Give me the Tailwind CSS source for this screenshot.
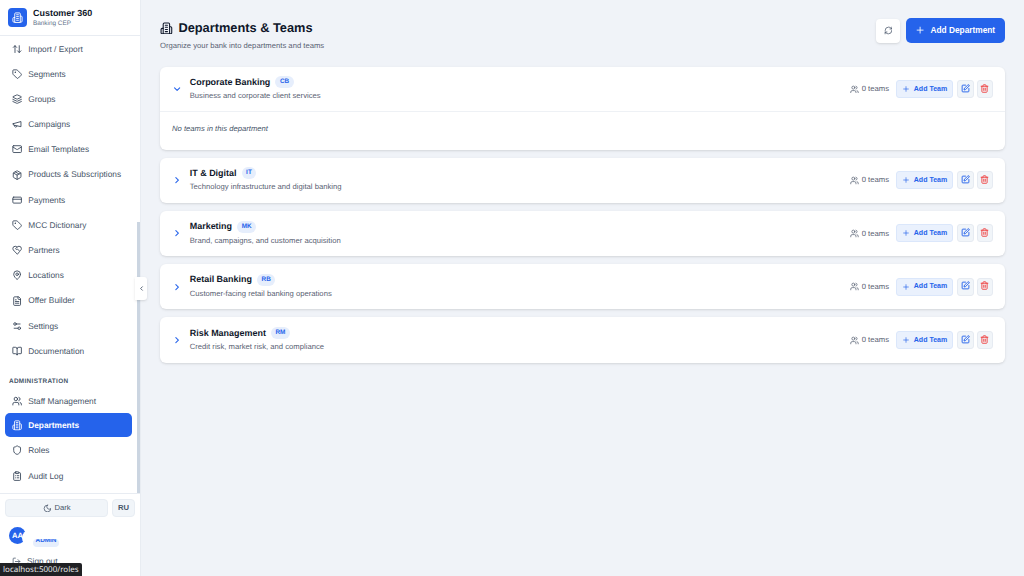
<!DOCTYPE html>
<html lang="en">

<head>
  <meta charset="UTF-8">
  <title>Departments & Teams</title>
  <script src="https://cdn.jsdelivr.net/npm/@tailwindcss/browser@4"></script>
</head>

<body class="h-[576px] w-[1024px] overflow-hidden bg-[#f0f3f8] font-['Liberation_Sans',sans-serif] [text-rendering:geometricPrecision]">
  <div class="flex h-full">

    <!-- Sidebar -->
    <aside class="relative flex h-full w-[141px] shrink-0 flex-col border-r border-[#e8ecf2] bg-white">
      <div class="flex h-[36px] shrink-0 items-center gap-[6px] border-b border-[#e8ecf2] pl-[8px]">
        <div class="flex h-[19px] w-[19px] items-center justify-center rounded-[4px] bg-[#2563eb] text-white">
          <svg class="h-[11px] w-[11px]" viewBox="0 0 24 24" fill="none" stroke="currentColor" stroke-width="2" stroke-linecap="round" stroke-linejoin="round"><path d="M6 22V4a2 2 0 0 1 2-2h8a2 2 0 0 1 2 2v18Z"/><path d="M6 12H4a2 2 0 0 0-2 2v6a2 2 0 0 0 2 2h2"/><path d="M18 9h2a2 2 0 0 1 2 2v9a2 2 0 0 1-2 2h-2"/><path d="M10 6h4M10 10h4M10 14h4M10 18h4"/></svg>
        </div>
        <div>
          <div class="text-[8.96px] leading-[12px] font-bold text-[#0f172a]">Customer 360</div>
          <div class="text-[6.4px] leading-[9px] text-[#64748b]">Banking CEP</div>
        </div>
      </div>

      <nav class="flex flex-col px-[5px] pt-[0.2px] text-[8.32px] text-[#475569]">
        <a class="flex h-[25.2px] items-center gap-[6.4px] pl-[6.6px]">
          <svg class="h-[10.24px] w-[10.24px] text-[#334155]" viewBox="0 0 24 24" fill="none" stroke="currentColor" stroke-width="2" stroke-linecap="round" stroke-linejoin="round"><path d="m21 16-4 4-4-4"/><path d="M17 20V4"/><path d="m3 8 4-4 4 4"/><path d="M7 4v16"/></svg>
          Import / Export
        </a>
        <a class="flex h-[25.2px] items-center gap-[6.4px] pl-[6.6px]">
          <svg class="h-[10.24px] w-[10.24px] text-[#334155]" viewBox="0 0 24 24" fill="none" stroke="currentColor" stroke-width="2" stroke-linecap="round" stroke-linejoin="round"><path d="M12.6 2.6A2 2 0 0 0 11.2 2H4a2 2 0 0 0-2 2v7.2a2 2 0 0 0 .6 1.4l8.7 8.7a2.4 2.4 0 0 0 3.4 0l6.6-6.6a2.4 2.4 0 0 0 0-3.4z"/><circle cx="7.5" cy="7.5" r=".5" fill="currentColor"/></svg>
          Segments
        </a>
        <a class="flex h-[25.2px] items-center gap-[6.4px] pl-[6.6px]">
          <svg class="h-[10.24px] w-[10.24px] text-[#334155]" viewBox="0 0 24 24" fill="none" stroke="currentColor" stroke-width="2" stroke-linecap="round" stroke-linejoin="round"><path d="M12.8 2.2a2 2 0 0 0-1.6 0L2.6 6.1a1 1 0 0 0 0 1.8l8.6 3.9a2 2 0 0 0 1.6 0l8.6-3.9a1 1 0 0 0 0-1.8z"/><path d="m22 17.6-9.2 4.2a2 2 0 0 1-1.6 0L2 17.6"/><path d="m22 12.6-9.2 4.2a2 2 0 0 1-1.6 0L2 12.6"/></svg>
          Groups
        </a>
        <a class="flex h-[25.2px] items-center gap-[6.4px] pl-[6.6px]">
          <svg class="h-[10.24px] w-[10.24px] text-[#334155]" viewBox="0 0 24 24" fill="none" stroke="currentColor" stroke-width="2" stroke-linecap="round" stroke-linejoin="round"><path d="m3 11 18-5v12L3 14v-3z"/><path d="M11.6 16.8a3 3 0 1 1-5.8-1.6"/></svg>
          Campaigns
        </a>
        <a class="flex h-[25.2px] items-center gap-[6.4px] pl-[6.6px]">
          <svg class="h-[10.24px] w-[10.24px] text-[#334155]" viewBox="0 0 24 24" fill="none" stroke="currentColor" stroke-width="2" stroke-linecap="round" stroke-linejoin="round"><rect x="2" y="4" width="20" height="16" rx="2"/><path d="m22 7-8.97 5.7a1.94 1.94 0 0 1-2.06 0L2 7"/></svg>
          Email Templates
        </a>
        <a class="flex h-[25.2px] items-center gap-[6.4px] pl-[6.6px]">
          <svg class="h-[10.24px] w-[10.24px] text-[#334155]" viewBox="0 0 24 24" fill="none" stroke="currentColor" stroke-width="2" stroke-linecap="round" stroke-linejoin="round"><path d="M21 8a2 2 0 0 0-1-1.7l-7-4a2 2 0 0 0-2 0l-7 4A2 2 0 0 0 3 8v8a2 2 0 0 0 1 1.7l7 4a2 2 0 0 0 2 0l7-4a2 2 0 0 0 1-1.7Z"/><path d="m3.3 7 8.7 5 8.7-5"/><path d="M12 22V12"/><path d="m7.5 4.3 9 5.1"/></svg>
          <span class="whitespace-nowrap">Products &amp; Subscriptions</span>
        </a>
        <a class="flex h-[25.2px] items-center gap-[6.4px] pl-[6.6px]">
          <svg class="h-[10.24px] w-[10.24px] text-[#334155]" viewBox="0 0 24 24" fill="none" stroke="currentColor" stroke-width="2" stroke-linecap="round" stroke-linejoin="round"><rect x="2" y="5" width="20" height="14" rx="2"/><path d="M2 10h20"/></svg>
          Payments
        </a>
        <a class="flex h-[25.2px] items-center gap-[6.4px] pl-[6.6px]">
          <svg class="h-[10.24px] w-[10.24px] text-[#334155]" viewBox="0 0 24 24" fill="none" stroke="currentColor" stroke-width="2" stroke-linecap="round" stroke-linejoin="round"><path d="M12.6 2.6A2 2 0 0 0 11.2 2H4a2 2 0 0 0-2 2v7.2a2 2 0 0 0 .6 1.4l8.7 8.7a2.4 2.4 0 0 0 3.4 0l6.6-6.6a2.4 2.4 0 0 0 0-3.4z"/><circle cx="7.5" cy="7.5" r=".5" fill="currentColor"/></svg>
          MCC Dictionary
        </a>
        <a class="flex h-[25.2px] items-center gap-[6.4px] pl-[6.6px]">
          <svg class="h-[10.24px] w-[10.24px] text-[#334155]" viewBox="0 0 24 24" fill="none" stroke="currentColor" stroke-width="2" stroke-linecap="round" stroke-linejoin="round"><path d="M19 14c1.5-1.5 3-3.2 3-5.500A5.500 5.500 0 0 0 16.500 3c-1.800 0-3 .5-4.500 2-1.500-1.500-2.700-2-4.500-2A5.500 5.500 0 0 0 2 8.500c0 2.300 1.500 4 3 5.500l7 7Z"/><path d="M12 5 9 8c-1 1 0 2.500 1.500 2.500 1 0 1.800-.5 2.500-1l4 4"/></svg>
          Partners
        </a>
        <a class="flex h-[25.2px] items-center gap-[6.4px] pl-[6.6px]">
          <svg class="h-[10.24px] w-[10.24px] text-[#334155]" viewBox="0 0 24 24" fill="none" stroke="currentColor" stroke-width="2" stroke-linecap="round" stroke-linejoin="round"><path d="M20 10c0 5-5.500 10.200-7.400 11.800a1 1 0 0 1-1.200 0C9.500 20.200 4 15 4 10a8 8 0 0 1 16 0"/><circle cx="12" cy="10" r="3"/></svg>
          Locations
        </a>
        <a class="flex h-[25.2px] items-center gap-[6.4px] pl-[6.6px]">
          <svg class="h-[10.24px] w-[10.24px] text-[#334155]" viewBox="0 0 24 24" fill="none" stroke="currentColor" stroke-width="2" stroke-linecap="round" stroke-linejoin="round"><path d="M15 2H6a2 2 0 0 0-2 2v16a2 2 0 0 0 2 2h12a2 2 0 0 0 2-2V7Z"/><path d="M14 2v4a2 2 0 0 0 2 2h4"/><path d="M16 13H8M16 17H8M10 9H8"/></svg>
          Offer Builder
        </a>
        <a class="flex h-[25.2px] items-center gap-[6.4px] pl-[6.6px]">
          <svg class="h-[10.24px] w-[10.24px] text-[#334155]" viewBox="0 0 24 24" fill="none" stroke="currentColor" stroke-width="2" stroke-linecap="round" stroke-linejoin="round"><path d="M14 17H5"/><path d="M19 7h-9"/><circle cx="17" cy="17" r="3"/><circle cx="7" cy="7" r="3"/></svg>
          Settings
        </a>
        <a class="flex h-[25.2px] items-center gap-[6.4px] pl-[6.6px]">
          <svg class="h-[10.24px] w-[10.24px] text-[#334155]" viewBox="0 0 24 24" fill="none" stroke="currentColor" stroke-width="2" stroke-linecap="round" stroke-linejoin="round"><path d="M12 7v14"/><path d="M3 18a1 1 0 0 1-1-1V4a1 1 0 0 1 1-1h5a4 4 0 0 1 4 4 4 4 0 0 1 4-4h5a1 1 0 0 1 1 1v13a1 1 0 0 1-1 1h-6a3 3 0 0 0-3 3 3 3 0 0 0-3-3z"/></svg>
          Documentation
        </a>

        <div class="mt-[13px] mb-[2.6px] pl-[4px] text-[6.4px] leading-[9px] font-bold tracking-[0.32px] text-[#475569]">ADMINISTRATION</div>

        <a class="flex h-[25.2px] items-center gap-[6.4px] pl-[6.6px]">
          <svg class="h-[10.24px] w-[10.24px] text-[#334155]" viewBox="0 0 24 24" fill="none" stroke="currentColor" stroke-width="2" stroke-linecap="round" stroke-linejoin="round"><path d="M16 21v-2a4 4 0 0 0-4-4H6a4 4 0 0 0-4 4v2"/><circle cx="9" cy="7" r="4"/><path d="M22 21v-2a4 4 0 0 0-3-3.870"/><path d="M16 3.130a4 4 0 0 1 0 7.750"/></svg>
          Staff Management
        </a>
        <a class="flex h-[24px] w-[127px] items-center gap-[6.4px] rounded-[5px] bg-[#2563eb] pl-[6.6px] font-bold text-white">
          <svg class="h-[10.24px] w-[10.24px]" viewBox="0 0 24 24" fill="none" stroke="currentColor" stroke-width="2" stroke-linecap="round" stroke-linejoin="round"><path d="M6 22V4a2 2 0 0 1 2-2h8a2 2 0 0 1 2 2v18Z"/><path d="M6 12H4a2 2 0 0 0-2 2v6a2 2 0 0 0 2 2h2"/><path d="M18 9h2a2 2 0 0 1 2 2v9a2 2 0 0 1-2 2h-2"/><path d="M10 6h4M10 10h4M10 14h4M10 18h4"/></svg>
          Departments
        </a>
        <a class="flex h-[26px] items-center gap-[6.4px] pl-[6.6px]">
          <svg class="h-[10.24px] w-[10.24px] text-[#334155]" viewBox="0 0 24 24" fill="none" stroke="currentColor" stroke-width="2" stroke-linecap="round" stroke-linejoin="round"><path d="M20 13c0 5-3.500 7.500-7.660 8.950a1 1 0 0 1-.67-.01C7.500 20.500 4 18 4 13V6a1 1 0 0 1 1-1c2 0 4.500-1.200 6.240-2.720a1.170 1.170 0 0 1 1.520 0C14.510 3.810 17 5 19 5a1 1 0 0 1 1 1z"/></svg>
          Roles
        </a>
        <a class="flex h-[25.2px] items-center gap-[6.4px] pl-[6.6px]">
          <svg class="h-[10.24px] w-[10.24px] text-[#334155]" viewBox="0 0 24 24" fill="none" stroke="currentColor" stroke-width="2" stroke-linecap="round" stroke-linejoin="round"><rect x="8" y="2" width="8" height="4" rx="1"/><path d="M16 4h2a2 2 0 0 1 2 2v14a2 2 0 0 1-2 2H6a2 2 0 0 1-2-2V6a2 2 0 0 1 2-2h2"/><path d="M12 11h4M12 16h4M8 11h.01M8 16h.01"/></svg>
          Audit Log
        </a>
      </nav>

      <!-- scrollbar thumb -->
      <div class="absolute top-[222px] right-0 h-[272px] w-[3px] bg-[#cbd5e1]"></div>

      <!-- collapse handle -->
      <div class="absolute top-[277px] right-[-7px] z-10 flex h-[23px] w-[12px] items-center justify-center rounded-r-[3px] bg-white text-[#475569] shadow-sm">
        <svg class="h-[7px] w-[7px]" viewBox="0 0 24 24" fill="none" stroke="currentColor" stroke-width="3" stroke-linecap="round" stroke-linejoin="round"><path d="m15 18-6-6 6-6"/></svg>
      </div>

      <!-- sidebar footer -->
      <div class="absolute right-0 bottom-0 left-0 h-[83px] border-t border-[#e8ecf2] bg-white px-[5px] pt-[5px]">
        <div class="flex gap-[4px]">
          <button class="flex h-[18px] w-[104px] items-center justify-center gap-[3px] rounded-[4px] border border-[#e8edf3] bg-[#f1f5f9] text-[7.68px] text-[#475569]">
            <svg class="h-[8.96px] w-[8.96px]" viewBox="0 0 24 24" fill="none" stroke="currentColor" stroke-width="2" stroke-linecap="round" stroke-linejoin="round"><path d="M12 3a6 6 0 0 0 9 9 9 9 0 1 1-9-9Z"/></svg>
            Dark
          </button>
          <button class="flex h-[18px] w-[23px] items-center justify-center rounded-[4px] border border-[#e8edf3] bg-[#f1f5f9] text-[7.68px] font-bold text-[#475569]">RU</button>
        </div>
        <div class="relative mt-[10px] h-[20px]">
          <div class="ml-[4px] flex h-[17px] w-[17px] items-center rounded-full bg-[#2563eb] pl-[3px] text-[7.68px] font-bold text-white">AA</div>
          <!-- name block sits over the avatar and clips it -->
          <div class="absolute top-[3px] left-[17px] h-[16px] w-[16px] rounded-full bg-white"></div>
          <div class="absolute top-[12px] left-[28px] h-[7.5px] w-[26px] overflow-hidden rounded-full bg-[#e6eefc] text-center text-[6.4px] leading-[3px] font-bold text-[#2563eb]">ADMIN</div>
        </div>
        <div class="mt-[8px] flex items-center gap-[6px] pl-[7px] text-[8.32px] text-[#475569]">
          <svg class="h-[9px] w-[9px]" viewBox="0 0 24 24" fill="none" stroke="currentColor" stroke-width="2" stroke-linecap="round" stroke-linejoin="round"><path d="M9 21H5a2 2 0 0 1-2-2V5a2 2 0 0 1 2-2h4"/><path d="m16 17 5-5-5-5"/><path d="M21 12H9"/></svg>
          Sign out
        </div>
      </div>
    </aside>

    <!-- Main -->
    <main class="min-w-0 flex-1 px-[19px] pt-[18px]">
      <div class="flex items-start justify-between">
        <div>
          <div class="flex h-[20px] items-center gap-[5.6px]">
            <svg class="h-[12.8px] w-[12.8px] text-[#0f172a]" viewBox="0 0 24 24" fill="none" stroke="currentColor" stroke-width="2" stroke-linecap="round" stroke-linejoin="round"><path d="M6 22V4a2 2 0 0 1 2-2h8a2 2 0 0 1 2 2v18Z"/><path d="M6 12H4a2 2 0 0 0-2 2v6a2 2 0 0 0 2 2h2"/><path d="M18 9h2a2 2 0 0 1 2 2v9a2 2 0 0 1-2 2h-2"/><path d="M10 6h4M10 10h4M10 14h4M10 18h4"/></svg>
            <h1 class="text-[12.8px] font-bold text-[#0f172a]">Departments &amp; Teams</h1>
          </div>
          <p class="mt-[1px] text-[7.68px] leading-[14px] text-[#596273]">Organize your bank into departments and teams</p>
        </div>
        <div class="flex items-center gap-[6px]">
          <button class="flex h-[24px] w-[24px] items-center justify-center rounded-[4px] bg-white text-[#475569] shadow-sm">
            <svg class="h-[8.96px] w-[8.96px]" viewBox="0 0 24 24" fill="none" stroke="currentColor" stroke-width="2" stroke-linecap="round" stroke-linejoin="round"><path d="M3 12a9 9 0 0 1 9-9 9.750 9.750 0 0 1 6.740 2.740L21 8"/><path d="M21 3v5h-5"/><path d="M21 12a9 9 0 0 1-9 9 9.750 9.750 0 0 1-6.740-2.740L3 16"/><path d="M8 16H3v5"/></svg>
          </button>
          <button class="flex h-[25px] w-[99px] items-center justify-center gap-[5.4px] rounded-[5px] bg-[#2563eb] pr-[1px] text-[8.32px] font-bold text-white">
            <svg class="h-[10.24px] w-[10.24px]" viewBox="0 0 24 24" fill="none" stroke="currentColor" stroke-width="2" stroke-linecap="round" stroke-linejoin="round"><path d="M5 12h14M12 5v14"/></svg>
            Add Department
          </button>
        </div>
      </div>

      <div class="mt-[14px] flex flex-col gap-[8px]">
        <section class="h-[82.5px] rounded-[6px] bg-white shadow-sm">
          <div class="flex h-[45px] items-center justify-between border-b border-[#eef1f5] pr-[12px] pl-[12px]">
            <div class="flex items-center gap-[7.5px]">
              <svg class="h-[10.24px] w-[10.24px] text-[#2563eb]" viewBox="0 0 24 24" fill="none" stroke="currentColor" stroke-width="2.5" stroke-linecap="round" stroke-linejoin="round"><path d="m6 9 6 6 6-6"/></svg>
              <div>
                <div class="flex items-center gap-[5.12px]">
                  <span class="text-[8.96px] leading-[13px] font-bold text-[#0f172a]">Corporate Banking</span>
                  <span class="rounded-full bg-[#e6eefc] px-[4.5px] text-[6.4px] leading-[12px] font-bold text-[#2563eb]">CB</span>
                </div>
                <p class="mt-[1.5px] text-[7.68px] leading-[12px] text-[#596273]">Business and corporate client services</p>
              </div>
            </div>
            <div class="flex items-center">
              <span class="mr-[7px] flex items-center gap-[3px] text-[7.68px] text-[#596273]">
                <svg class="h-[8.96px] w-[8.96px]" viewBox="0 0 24 24" fill="none" stroke="currentColor" stroke-width="2" stroke-linecap="round" stroke-linejoin="round"><path d="M16 21v-2a4 4 0 0 0-4-4H6a4 4 0 0 0-4 4v2"/><circle cx="9" cy="7" r="4"/><path d="M22 21v-2a4 4 0 0 0-3-3.870"/><path d="M16 3.130a4 4 0 0 1 0 7.750"/></svg>
                0 teams
              </span>
              <button class="flex h-[18px] w-[57px] items-center justify-center gap-[4px] rounded-[3px] border border-[#dbe7fb] bg-[#eaf1fd] text-[7.04px] font-bold text-[#2563eb]">
                <svg class="h-[8px] w-[8px]" viewBox="0 0 24 24" fill="none" stroke="currentColor" stroke-width="2" stroke-linecap="round" stroke-linejoin="round"><path d="M5 12h14M12 5v14"/></svg>
                Add Team
              </button>
              <button class="ml-[4px] flex h-[18px] w-[16.5px] items-start justify-center rounded-[3px] border border-[#e6ebf2] bg-[#f1f5f9] pt-[2.5px] text-[#2563eb]">
                <svg class="h-[9px] w-[9px]" viewBox="0 0 24 24" fill="none" stroke="currentColor" stroke-width="2.5" stroke-linecap="round" stroke-linejoin="round"><path d="M12 3H5a2 2 0 0 0-2 2v14a2 2 0 0 0 2 2h14a2 2 0 0 0 2-2v-7"/><path d="M18.400 2.600a2 2 0 0 1 3 3L12 15l-4 1 1-4Z"/></svg>
              </button>
              <button class="ml-[3px] flex h-[18px] w-[16.5px] items-start justify-center rounded-[3px] border border-[#e6ebf2] bg-[#f1f5f9] pt-[2.5px] text-[#ef4444]">
                <svg class="h-[9px] w-[9px]" viewBox="0 0 24 24" fill="none" stroke="currentColor" stroke-width="2.5" stroke-linecap="round" stroke-linejoin="round"><path d="M3 6h18"/><path d="M19 6v14a2 2 0 0 1-2 2H7a2 2 0 0 1-2-2V6"/><path d="M8 6V4a2 2 0 0 1 2-2h4a2 2 0 0 1 2 2v2"/><path d="M10 11v6M14 11v6"/></svg>
              </button>
            </div>
          </div>
          <p class="pt-[11px] pl-[12px] text-[7.68px] leading-[12px] text-[#475569] italic">No teams in this department</p>
        </section>

        <section class="flex h-[45.3px] items-center justify-between rounded-[6px] bg-white pr-[12px] pl-[12px] shadow-sm">
          <div class="flex items-center gap-[7.5px]">
            <svg class="h-[10.24px] w-[10.24px] text-[#2563eb]" viewBox="0 0 24 24" fill="none" stroke="currentColor" stroke-width="2.5" stroke-linecap="round" stroke-linejoin="round"><path d="m9 18 6-6-6-6"/></svg>
            <div>
              <div class="flex items-center gap-[5.12px]">
                <span class="text-[8.96px] leading-[13px] font-bold text-[#0f172a]">IT &amp; Digital</span>
                <span class="rounded-full bg-[#e6eefc] px-[4.5px] text-[6.4px] leading-[12px] font-bold text-[#2563eb]">IT</span>
              </div>
              <p class="mt-[1.5px] text-[7.68px] leading-[12px] text-[#596273]">Technology infrastructure and digital banking</p>
            </div>
          </div>
          <div class="flex items-center">
            <span class="mr-[7px] flex items-center gap-[3px] text-[7.68px] text-[#596273]">
              <svg class="h-[8.96px] w-[8.96px]" viewBox="0 0 24 24" fill="none" stroke="currentColor" stroke-width="2" stroke-linecap="round" stroke-linejoin="round"><path d="M16 21v-2a4 4 0 0 0-4-4H6a4 4 0 0 0-4 4v2"/><circle cx="9" cy="7" r="4"/><path d="M22 21v-2a4 4 0 0 0-3-3.870"/><path d="M16 3.130a4 4 0 0 1 0 7.750"/></svg>
              0 teams
            </span>
            <button class="flex h-[18px] w-[57px] items-center justify-center gap-[4px] rounded-[3px] border border-[#dbe7fb] bg-[#eaf1fd] text-[7.04px] font-bold text-[#2563eb]">
              <svg class="h-[8px] w-[8px]" viewBox="0 0 24 24" fill="none" stroke="currentColor" stroke-width="2" stroke-linecap="round" stroke-linejoin="round"><path d="M5 12h14M12 5v14"/></svg>
              Add Team
            </button>
            <button class="ml-[4px] flex h-[18px] w-[16.5px] items-start justify-center rounded-[3px] border border-[#e6ebf2] bg-[#f1f5f9] pt-[2.5px] text-[#2563eb]">
              <svg class="h-[9px] w-[9px]" viewBox="0 0 24 24" fill="none" stroke="currentColor" stroke-width="2.5" stroke-linecap="round" stroke-linejoin="round"><path d="M12 3H5a2 2 0 0 0-2 2v14a2 2 0 0 0 2 2h14a2 2 0 0 0 2-2v-7"/><path d="M18.400 2.600a2 2 0 0 1 3 3L12 15l-4 1 1-4Z"/></svg>
            </button>
            <button class="ml-[3px] flex h-[18px] w-[16.5px] items-start justify-center rounded-[3px] border border-[#e6ebf2] bg-[#f1f5f9] pt-[2.5px] text-[#ef4444]">
              <svg class="h-[9px] w-[9px]" viewBox="0 0 24 24" fill="none" stroke="currentColor" stroke-width="2.5" stroke-linecap="round" stroke-linejoin="round"><path d="M3 6h18"/><path d="M19 6v14a2 2 0 0 1-2 2H7a2 2 0 0 1-2-2V6"/><path d="M8 6V4a2 2 0 0 1 2-2h4a2 2 0 0 1 2 2v2"/><path d="M10 11v6M14 11v6"/></svg>
            </button>
          </div>
        </section>

        <section class="flex h-[45.3px] items-center justify-between rounded-[6px] bg-white pr-[12px] pl-[12px] shadow-sm">
          <div class="flex items-center gap-[7.5px]">
            <svg class="h-[10.24px] w-[10.24px] text-[#2563eb]" viewBox="0 0 24 24" fill="none" stroke="currentColor" stroke-width="2.5" stroke-linecap="round" stroke-linejoin="round"><path d="m9 18 6-6-6-6"/></svg>
            <div>
              <div class="flex items-center gap-[5.12px]">
                <span class="text-[8.96px] leading-[13px] font-bold text-[#0f172a]">Marketing</span>
                <span class="rounded-full bg-[#e6eefc] px-[4.5px] text-[6.4px] leading-[12px] font-bold text-[#2563eb]">MK</span>
              </div>
              <p class="mt-[1.5px] text-[7.68px] leading-[12px] text-[#596273]">Brand, campaigns, and customer acquisition</p>
            </div>
          </div>
          <div class="flex items-center">
            <span class="mr-[7px] flex items-center gap-[3px] text-[7.68px] text-[#596273]">
              <svg class="h-[8.96px] w-[8.96px]" viewBox="0 0 24 24" fill="none" stroke="currentColor" stroke-width="2" stroke-linecap="round" stroke-linejoin="round"><path d="M16 21v-2a4 4 0 0 0-4-4H6a4 4 0 0 0-4 4v2"/><circle cx="9" cy="7" r="4"/><path d="M22 21v-2a4 4 0 0 0-3-3.870"/><path d="M16 3.130a4 4 0 0 1 0 7.750"/></svg>
              0 teams
            </span>
            <button class="flex h-[18px] w-[57px] items-center justify-center gap-[4px] rounded-[3px] border border-[#dbe7fb] bg-[#eaf1fd] text-[7.04px] font-bold text-[#2563eb]">
              <svg class="h-[8px] w-[8px]" viewBox="0 0 24 24" fill="none" stroke="currentColor" stroke-width="2" stroke-linecap="round" stroke-linejoin="round"><path d="M5 12h14M12 5v14"/></svg>
              Add Team
            </button>
            <button class="ml-[4px] flex h-[18px] w-[16.5px] items-start justify-center rounded-[3px] border border-[#e6ebf2] bg-[#f1f5f9] pt-[2.5px] text-[#2563eb]">
              <svg class="h-[9px] w-[9px]" viewBox="0 0 24 24" fill="none" stroke="currentColor" stroke-width="2.5" stroke-linecap="round" stroke-linejoin="round"><path d="M12 3H5a2 2 0 0 0-2 2v14a2 2 0 0 0 2 2h14a2 2 0 0 0 2-2v-7"/><path d="M18.400 2.600a2 2 0 0 1 3 3L12 15l-4 1 1-4Z"/></svg>
            </button>
            <button class="ml-[3px] flex h-[18px] w-[16.5px] items-start justify-center rounded-[3px] border border-[#e6ebf2] bg-[#f1f5f9] pt-[2.5px] text-[#ef4444]">
              <svg class="h-[9px] w-[9px]" viewBox="0 0 24 24" fill="none" stroke="currentColor" stroke-width="2.5" stroke-linecap="round" stroke-linejoin="round"><path d="M3 6h18"/><path d="M19 6v14a2 2 0 0 1-2 2H7a2 2 0 0 1-2-2V6"/><path d="M8 6V4a2 2 0 0 1 2-2h4a2 2 0 0 1 2 2v2"/><path d="M10 11v6M14 11v6"/></svg>
            </button>
          </div>
        </section>

        <section class="flex h-[45.3px] items-center justify-between rounded-[6px] bg-white pr-[12px] pl-[12px] shadow-sm">
          <div class="flex items-center gap-[7.5px]">
            <svg class="h-[10.24px] w-[10.24px] text-[#2563eb]" viewBox="0 0 24 24" fill="none" stroke="currentColor" stroke-width="2.5" stroke-linecap="round" stroke-linejoin="round"><path d="m9 18 6-6-6-6"/></svg>
            <div>
              <div class="flex items-center gap-[5.12px]">
                <span class="text-[8.96px] leading-[13px] font-bold text-[#0f172a]">Retail Banking</span>
                <span class="rounded-full bg-[#e6eefc] px-[4.5px] text-[6.4px] leading-[12px] font-bold text-[#2563eb]">RB</span>
              </div>
              <p class="mt-[1.5px] text-[7.68px] leading-[12px] text-[#596273]">Customer-facing retail banking operations</p>
            </div>
          </div>
          <div class="flex items-center">
            <span class="mr-[7px] flex items-center gap-[3px] text-[7.68px] text-[#596273]">
              <svg class="h-[8.96px] w-[8.96px]" viewBox="0 0 24 24" fill="none" stroke="currentColor" stroke-width="2" stroke-linecap="round" stroke-linejoin="round"><path d="M16 21v-2a4 4 0 0 0-4-4H6a4 4 0 0 0-4 4v2"/><circle cx="9" cy="7" r="4"/><path d="M22 21v-2a4 4 0 0 0-3-3.870"/><path d="M16 3.130a4 4 0 0 1 0 7.750"/></svg>
              0 teams
            </span>
            <button class="flex h-[18px] w-[57px] items-center justify-center gap-[4px] rounded-[3px] border border-[#dbe7fb] bg-[#eaf1fd] text-[7.04px] font-bold text-[#2563eb]">
              <svg class="h-[8px] w-[8px]" viewBox="0 0 24 24" fill="none" stroke="currentColor" stroke-width="2" stroke-linecap="round" stroke-linejoin="round"><path d="M5 12h14M12 5v14"/></svg>
              Add Team
            </button>
            <button class="ml-[4px] flex h-[18px] w-[16.5px] items-start justify-center rounded-[3px] border border-[#e6ebf2] bg-[#f1f5f9] pt-[2.5px] text-[#2563eb]">
              <svg class="h-[9px] w-[9px]" viewBox="0 0 24 24" fill="none" stroke="currentColor" stroke-width="2.5" stroke-linecap="round" stroke-linejoin="round"><path d="M12 3H5a2 2 0 0 0-2 2v14a2 2 0 0 0 2 2h14a2 2 0 0 0 2-2v-7"/><path d="M18.400 2.600a2 2 0 0 1 3 3L12 15l-4 1 1-4Z"/></svg>
            </button>
            <button class="ml-[3px] flex h-[18px] w-[16.5px] items-start justify-center rounded-[3px] border border-[#e6ebf2] bg-[#f1f5f9] pt-[2.5px] text-[#ef4444]">
              <svg class="h-[9px] w-[9px]" viewBox="0 0 24 24" fill="none" stroke="currentColor" stroke-width="2.5" stroke-linecap="round" stroke-linejoin="round"><path d="M3 6h18"/><path d="M19 6v14a2 2 0 0 1-2 2H7a2 2 0 0 1-2-2V6"/><path d="M8 6V4a2 2 0 0 1 2-2h4a2 2 0 0 1 2 2v2"/><path d="M10 11v6M14 11v6"/></svg>
            </button>
          </div>
        </section>

        <section class="flex h-[45.3px] items-center justify-between rounded-[6px] bg-white pr-[12px] pl-[12px] shadow-sm">
          <div class="flex items-center gap-[7.5px]">
            <svg class="h-[10.24px] w-[10.24px] text-[#2563eb]" viewBox="0 0 24 24" fill="none" stroke="currentColor" stroke-width="2.5" stroke-linecap="round" stroke-linejoin="round"><path d="m9 18 6-6-6-6"/></svg>
            <div>
              <div class="flex items-center gap-[5.12px]">
                <span class="text-[8.96px] leading-[13px] font-bold text-[#0f172a]">Risk Management</span>
                <span class="rounded-full bg-[#e6eefc] px-[4.5px] text-[6.4px] leading-[12px] font-bold text-[#2563eb]">RM</span>
              </div>
              <p class="mt-[1.5px] text-[7.68px] leading-[12px] text-[#596273]">Credit risk, market risk, and compliance</p>
            </div>
          </div>
          <div class="flex items-center">
            <span class="mr-[7px] flex items-center gap-[3px] text-[7.68px] text-[#596273]">
              <svg class="h-[8.96px] w-[8.96px]" viewBox="0 0 24 24" fill="none" stroke="currentColor" stroke-width="2" stroke-linecap="round" stroke-linejoin="round"><path d="M16 21v-2a4 4 0 0 0-4-4H6a4 4 0 0 0-4 4v2"/><circle cx="9" cy="7" r="4"/><path d="M22 21v-2a4 4 0 0 0-3-3.870"/><path d="M16 3.130a4 4 0 0 1 0 7.750"/></svg>
              0 teams
            </span>
            <button class="flex h-[18px] w-[57px] items-center justify-center gap-[4px] rounded-[3px] border border-[#dbe7fb] bg-[#eaf1fd] text-[7.04px] font-bold text-[#2563eb]">
              <svg class="h-[8px] w-[8px]" viewBox="0 0 24 24" fill="none" stroke="currentColor" stroke-width="2" stroke-linecap="round" stroke-linejoin="round"><path d="M5 12h14M12 5v14"/></svg>
              Add Team
            </button>
            <button class="ml-[4px] flex h-[18px] w-[16.5px] items-start justify-center rounded-[3px] border border-[#e6ebf2] bg-[#f1f5f9] pt-[2.5px] text-[#2563eb]">
              <svg class="h-[9px] w-[9px]" viewBox="0 0 24 24" fill="none" stroke="currentColor" stroke-width="2.5" stroke-linecap="round" stroke-linejoin="round"><path d="M12 3H5a2 2 0 0 0-2 2v14a2 2 0 0 0 2 2h14a2 2 0 0 0 2-2v-7"/><path d="M18.400 2.600a2 2 0 0 1 3 3L12 15l-4 1 1-4Z"/></svg>
            </button>
            <button class="ml-[3px] flex h-[18px] w-[16.5px] items-start justify-center rounded-[3px] border border-[#e6ebf2] bg-[#f1f5f9] pt-[2.5px] text-[#ef4444]">
              <svg class="h-[9px] w-[9px]" viewBox="0 0 24 24" fill="none" stroke="currentColor" stroke-width="2.5" stroke-linecap="round" stroke-linejoin="round"><path d="M3 6h18"/><path d="M19 6v14a2 2 0 0 1-2 2H7a2 2 0 0 1-2-2V6"/><path d="M8 6V4a2 2 0 0 1 2-2h4a2 2 0 0 1 2 2v2"/><path d="M10 11v6M14 11v6"/></svg>
            </button>
          </div>
        </section>
      </div>
    </main>
  </div>

  <!-- link status bubble -->
  <div class="fixed bottom-0 left-0 z-20 h-[13px] rounded-tr-[2px] bg-[#202124] px-[3px] font-['Noto_Sans',sans-serif] text-[8px] leading-[13px] text-[#e8eaed]">localhost:5000/roles</div>
</body>

</html>
